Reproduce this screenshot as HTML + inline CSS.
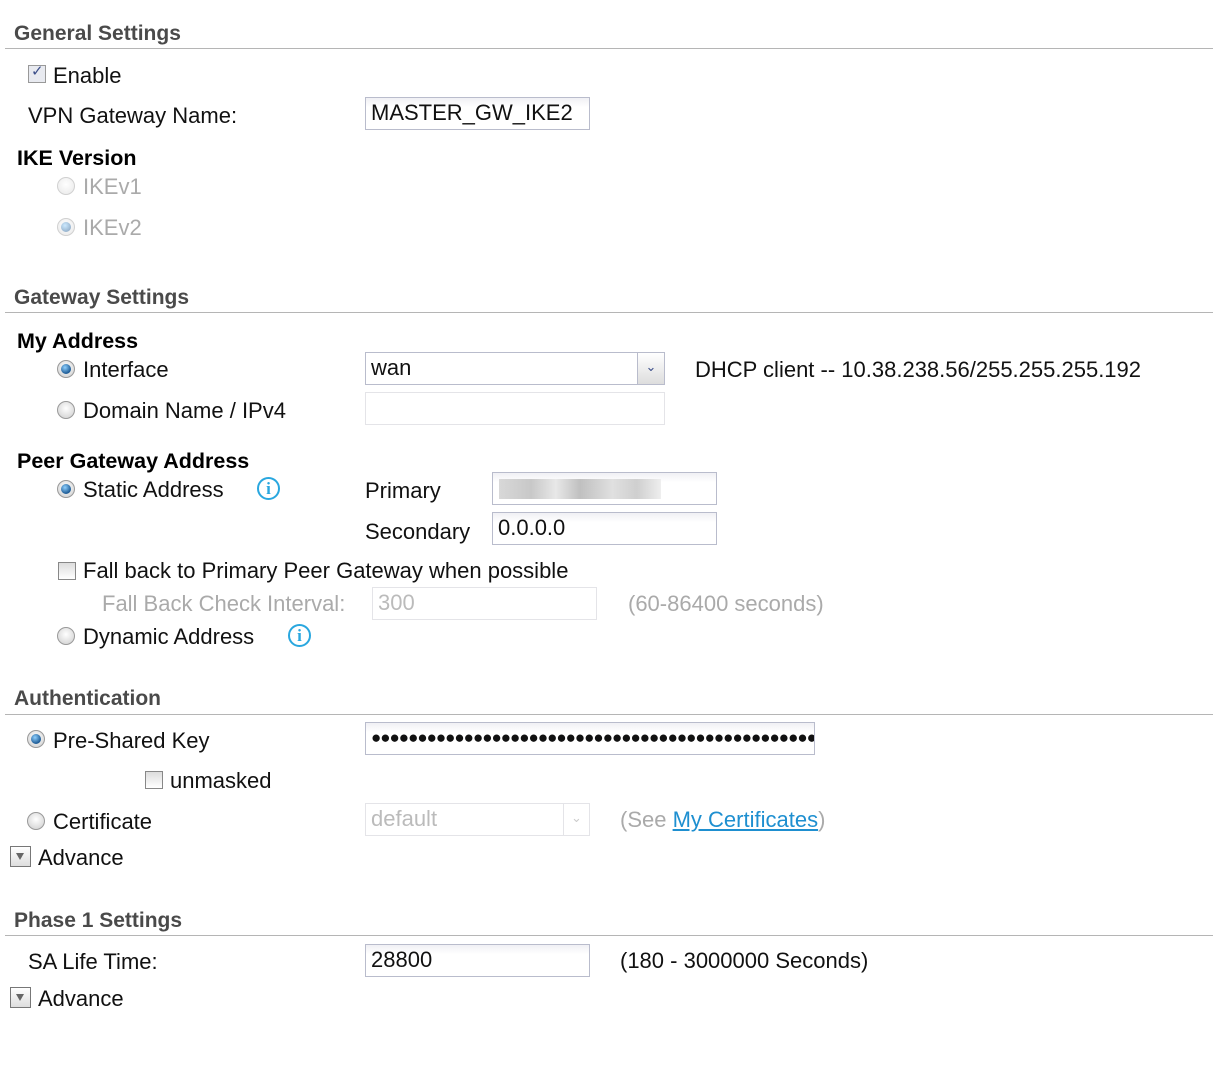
<!DOCTYPE html>
<html><head><meta charset="utf-8"><style>
body{margin:0;width:1213px;height:1067px;background:#fff;position:relative;overflow:hidden;font-family:"Liberation Sans",sans-serif;font-size:22px;color:#111}
.t{position:absolute;line-height:26px;white-space:nowrap}
.h{font-weight:bold;color:#4a4a4a;font-size:21px}
.b{font-weight:bold;color:#000;font-size:21.5px}
.g{color:#aaa}
.line{position:absolute;left:5px;right:0;height:1px;background:#b5b5b5}
.in{position:absolute;box-sizing:border-box;border:1px solid #b9bccc;background:linear-gradient(#f0f0f4,#fff 30%);height:33px;line-height:30px;padding-left:5px;font-size:22px}
.dis{border-color:#e4e4e8;color:#bbb;background:#fff}
.rad{position:absolute;width:18px;height:18px;border-radius:50%;box-sizing:border-box;border:1px solid #999;background:radial-gradient(circle at 50% 40%,#fff,#ccc)}
.rad.on::after{content:"";position:absolute;left:3px;top:3px;width:10px;height:10px;border-radius:50%;background:radial-gradient(circle at 40% 35%,#8fd0ff,#1c5a94 70%)}
.rad.dim{opacity:.45}
.cb{position:absolute;width:18px;height:18px;box-sizing:border-box;border:1px solid #888;background:linear-gradient(#ddd,#fff)}
.info{position:absolute;width:23px;height:23px;box-sizing:border-box;border:2px solid #29a7df;border-radius:50%;color:#29a7df;font-size:17px;font-weight:bold;text-align:center;line-height:20px;font-family:"Liberation Serif",serif}
.adv{position:absolute;width:21px;height:21px;box-sizing:border-box;border:1px solid #777;background:linear-gradient(#fff,#ddd)}
.adv::after{content:"";position:absolute;left:5px;top:6px;border-left:4px solid transparent;border-right:4px solid transparent;border-top:7px solid #666}
</style></head><body>
<div class="t h" style="left:14px;top:21px">General Settings</div>
<div class="line" style="top:48px"></div>
<div class="cb" style="left:28px;top:65px;border-color:#999;background:#e8eaf0"><span style="position:absolute;left:2px;top:-4px;font-size:15px;color:#3c4f8a">✓</span></div>
<div class="t" style="left:53px;top:63px">Enable</div>
<div class="t" style="left:28px;top:103px">VPN Gateway Name:</div>
<div class="in" style="left:365px;top:97px;width:225px">MASTER_GW_IKE2</div>
<div class="t b" style="left:17px;top:145px">IKE Version</div>
<div class="rad dim" style="left:57px;top:177px"></div><div class="t g" style="left:83px;top:174px">IKEv1</div>
<div class="rad on dim" style="left:57px;top:218px"></div><div class="t g" style="left:83px;top:215px">IKEv2</div>

<div class="t h" style="left:14px;top:285px">Gateway Settings</div>
<div class="line" style="top:312px"></div>
<div class="t b" style="left:17px;top:328px">My Address</div>
<div class="rad on" style="left:57px;top:360px"></div><div class="t" style="left:83px;top:357px">Interface</div>
<div class="in" style="left:365px;top:352px;width:300px;background:#fff">wan<div style="position:absolute;right:0;top:0;width:26px;height:31px;border-left:1px solid #b9bccc;background:linear-gradient(#fff,#ddd);color:#3c4f8a;font-size:13px;text-align:center;line-height:28px">&#8964;</div></div>
<div class="t" style="left:695px;top:357px">DHCP client -- 10.38.238.56/255.255.255.192</div>
<div class="rad" style="left:57px;top:401px"></div><div class="t" style="left:83px;top:398px">Domain Name / IPv4</div>
<div class="in dis" style="left:365px;top:392px;width:300px"></div>
<div class="t b" style="left:17px;top:448px">Peer Gateway Address</div>
<div class="rad on" style="left:57px;top:480px"></div><div class="t" style="left:83px;top:477px">Static Address</div>
<div class="info" style="left:257px;top:477px">i</div>
<div class="t" style="left:365px;top:478px">Primary</div>
<div class="in" style="left:492px;top:472px;width:225px"><div style="position:absolute;left:6px;top:6px;width:162px;height:20px;background:linear-gradient(90deg,#d8d8d8,#c8c8c8 20%,#e8e8e8 35%,#c0c0c0 50%,#e0e0e0 70%,#cfcfcf 85%,#eee)"></div></div>
<div class="t" style="left:365px;top:519px">Secondary</div>
<div class="in" style="left:492px;top:512px;width:225px">0.0.0.0</div>
<div class="cb" style="left:58px;top:562px"></div><div class="t" style="left:83px;top:558px">Fall back to Primary Peer Gateway when possible</div>
<div class="t g" style="left:102px;top:591px">Fall Back Check Interval:</div>
<div class="in dis" style="left:372px;top:587px;width:225px">300</div>
<div class="t g" style="left:628px;top:591px">(60-86400 seconds)</div>
<div class="rad" style="left:57px;top:627px"></div><div class="t" style="left:83px;top:624px">Dynamic Address</div>
<div class="info" style="left:288px;top:624px">i</div>

<div class="t h" style="left:14px;top:686px">Authentication</div>
<div class="line" style="top:714px"></div>
<div class="rad on" style="left:27px;top:730px"></div><div class="t" style="left:53px;top:728px">Pre-Shared Key</div>
<div class="in" style="left:365px;top:722px;width:450px;overflow:hidden;font-size:17px;letter-spacing:-1px;font-weight:bold">●●●●●●●●●●●●●●●●●●●●●●●●●●●●●●●●●●●●●●●●●●●●●●●●●●●●●</div>
<div class="cb" style="left:145px;top:771px"></div><div class="t" style="left:170px;top:768px">unmasked</div>
<div class="rad" style="left:27px;top:812px"></div><div class="t" style="left:53px;top:809px">Certificate</div>
<div class="in dis" style="left:365px;top:803px;width:225px">default<div style="position:absolute;right:0;top:0;width:25px;height:31px;border-left:1px solid #e4e4e8;color:#ccc;font-size:13px;text-align:center;line-height:28px">&#8964;</div></div>
<div class="t g" style="left:620px;top:807px">(See <span style="color:#1e8fd0;text-decoration:underline">My Certificates</span>)</div>
<div class="adv" style="left:10px;top:846px"></div><div class="t" style="left:38px;top:845px">Advance</div>

<div class="t h" style="left:14px;top:908px">Phase 1 Settings</div>
<div class="line" style="top:935px"></div>
<div class="t" style="left:28px;top:949px">SA Life Time:</div>
<div class="in" style="left:365px;top:944px;width:225px">28800</div>
<div class="t" style="left:620px;top:948px">(180 - 3000000 Seconds)</div>
<div class="adv" style="left:10px;top:987px"></div><div class="t" style="left:38px;top:986px">Advance</div>
</body></html>
